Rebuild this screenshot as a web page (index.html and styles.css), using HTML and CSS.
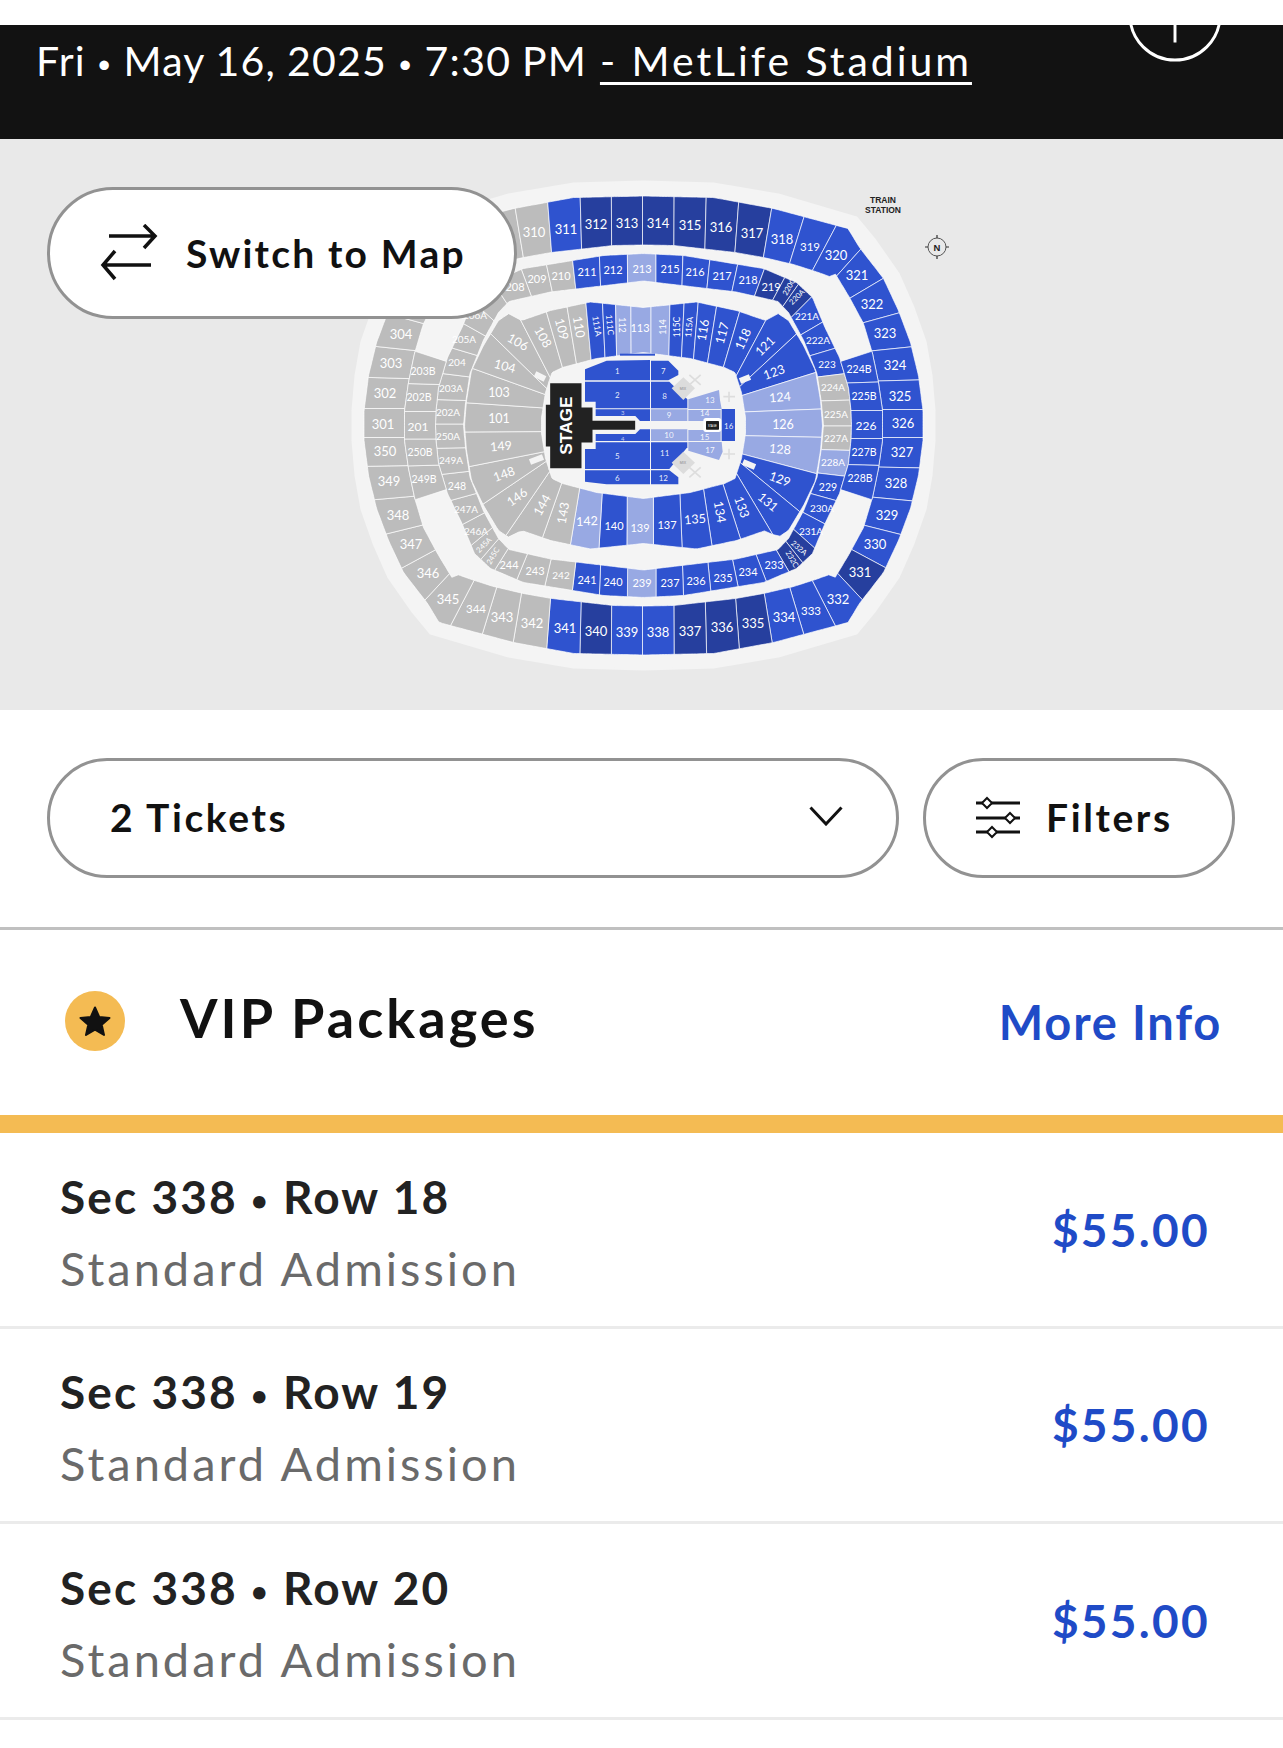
FILE: index.html
```html
<!DOCTYPE html>
<html lang="en">
<head>
<meta charset="utf-8">
<title>MetLife Stadium tickets</title>
<link rel="stylesheet" href="styles.css">
</head>
<body>
<div class="top-gap"></div>
<header class="event-bar">
  <p class="event-line">Fri <span class="dot">•</span> May 16, 2025 <span class="dot">•</span> 7:30 PM <a class="venue">- MetLife Stadium</a></p>
  <svg class="info-icon" viewBox="0 0 96 96"><circle cx="48" cy="48" r="46"/><path d="M48 20V76M20 48H76"/></svg>
</header>
<section class="map-panel">
  <svg class="seat-map" id="seatmap" viewBox="0 139 1283 571" xmlns="http://www.w3.org/2000/svg">
    <polygon id="stadium-base" class="base"/>
    <g id="rings"></g>
    <g class="floor" transform="translate(530 340) scale(.33333)">
      <polygon class="f-b" points="165,88 230,62 360,60 360,121 165,121"/>
      <polygon class="f-b" points="165,125 360,125 360,205 197,205 197,185 165,185"/>
      <polygon class="f-b" points="197,208 360,208 360,243 330,243 316,228 197,228"/>
      <polygon class="f-b" points="197,282 316,282 330,268 360,268 360,303 197,303"/>
      <polygon class="f-b" points="165,327 197,327 197,307 360,307 360,387 165,387"/>
      <polygon class="f-b" points="165,391 360,391 360,433 230,433 165,425"/>
      <polygon class="f-b" points="363,62 415,62 445,92 445,105 415,121 363,121"/>
      <polygon class="f-b" points="363,125 418,125 472,178 472,205 363,205"/>
      <polygon class="f-l" points="363,208 472,208 472,243 363,243"/>
      <polygon class="f-l" points="363,268 472,268 472,303 363,303"/>
      <polygon class="f-b" points="363,307 472,307 472,322 418,387 363,387"/>
      <polygon class="f-b" points="363,391 418,391 445,412 445,433 363,433"/>
      <polygon class="f-l" points="475,178 567,150 570,180 575,207 475,207"/>
      <polygon class="f-l" points="475,210 572,210 572,243 475,243"/>
      <polygon class="f-l" points="475,270 572,270 572,303 475,303"/>
      <polygon class="f-b" points="575,207 615,207 615,303 575,303"/>
      <polygon class="f-l" points="475,306 575,306 578,335 567,360 475,332"/>
      <rect class="strip" x="270" y="41" width="105" height="6"/>
      <polygon class="mix" points="460,112 495,145 460,180 425,145"/>
      <polygon class="mix" points="460,335 495,368 460,402 425,368"/>
      <path class="cross" d="M478 135 512 105M478 105 512 135M580 170H615M597 155V186M580 342H615M597 326V358M478 382 512 412M478 412 512 382"/>
      <rect class="bstage-bg" x="520" y="234" width="54" height="42" rx="8"/>
      <rect class="bstage" x="528" y="243" width="39" height="26" rx="2"/>
      <text class="bstage-t" x="547" y="261">STAGE</text>
      <path class="stage" d="M58 127H157V200H190V240H318V272H190V310H157V387H58V322H45V192H58Z"/>
      <text class="stage-t" transform="translate(127 257) rotate(-90)">STAGE</text>
      <text class="mix-t" x="459" y="150">MIX</text>
      <text class="mix-t" x="459" y="373">MIX</text>
      <text class="f-t" x="262" y="94">1</text>
      <text class="f-t" x="262" y="166">2</text>
      <text class="f-t f-s" x="278" y="218">3</text>
      <text class="f-t f-s" x="278" y="297">4</text>
      <text class="f-t" x="262" y="348">5</text>
      <text class="f-t" x="262" y="414">6</text>
      <text class="f-t" x="400" y="94">7</text>
      <text class="f-t" x="404" y="168">8</text>
      <text class="f-t" x="417" y="226">9</text>
      <text class="f-t" x="417" y="286">10</text>
      <text class="f-t" x="404" y="340">11</text>
      <text class="f-t" x="400" y="414">12</text>
      <text class="f-t" x="540" y="180">13</text>
      <text class="f-t" x="524" y="218">14</text>
      <text class="f-t" x="524" y="291">15</text>
      <text class="f-t" x="596" y="258">16</text>
      <text class="f-t" x="540" y="330">17</text>
    </g>
    <path class="notch" d="M535 374 545 379M530 462 543 457M740 381 750 377M743 462 755 467"/>
    <text class="station" x="883" y="203">TRAIN</text>
    <text class="station" x="883" y="213">STATION</text>
    <g class="compass">
      <circle cx="937" cy="247" r="9"/>
      <path d="M925 247H928M946 247H949M937 235V238M937 256V259"/>
      <text x="937" y="247">N</text>
    </g>
  </svg>
  <button class="switch-pill" type="button">
    <svg class="swap-icon" viewBox="0 0 60 58"><path d="M9 12H55M44 1 55 12 44 24M51 41H3M15 27 3 41 15 55"/></svg>
    <span>Switch to Map</span>
  </button>
</section>
<section class="controls">
  <div class="pill tickets">
    <span>2 Tickets</span>
    <svg class="chevron" viewBox="0 0 34 20"><path d="M1.5 1.5 17 18 32.500 1.500"/></svg>
  </div>
  <div class="pill filters">
    <svg class="filter-icon" viewBox="0 0 44 40">
      <path d="M0 5H44M0 20H44M0 34H44"/>
      <path class="knob" d="M11 0 16 5 11 10 6 5ZM34 15 39 20 34 25 29 20ZM16 29 21 34 16 39 11 34Z"/>
    </svg>
    <span>Filters</span>
  </div>
</section>
<section class="vip-head">
  <div class="vip-title">
    <svg class="vip-badge" viewBox="0 0 60 60"><circle cx="30" cy="30" r="30"/><polygon points="30,16.500 34.200,26 44.500,27 36.700,33.800 39,44 30,38.700 21,44 23.300,33.800 15.500,27 25.800,26"/></svg>
    <h2>VIP Packages</h2>
  </div>
  <a class="more-info">More Info</a>
</section>
<div class="gold-bar"></div>
<ul class="ticket-list">
  <li class="ticket"><div><p class="seat">Sec 338 <span class="dot">•</span> Row 18</p><p class="admission">Standard Admission</p></div><p class="price">$55.00</p></li>
  <li class="ticket"><div><p class="seat">Sec 338 <span class="dot">•</span> Row 19</p><p class="admission">Standard Admission</p></div><p class="price">$55.00</p></li>
  <li class="ticket"><div><p class="seat">Sec 338 <span class="dot">•</span> Row 20</p><p class="admission">Standard Admission</p></div><p class="price">$55.00</p></li>
</ul>
<script src="map.js"></script>
</body>
</html>
```
FILE: styles.css
```css
* { box-sizing: border-box; }
html, body { margin: 0; padding: 0; background: #fff; }
body { width: 1283px; height: 1748px; overflow: hidden; font-family: "Lato", "Noto Sans", sans-serif; color: #111; }
p, h2, ul { margin: 0; padding: 0; }
.top-gap { height: 25px; background: #fff; }
.dot { font-size: .62em; vertical-align: .12em; }

.event-bar { position: relative; height: 114px; background: #121212; overflow: hidden; padding: 11px 0 0 36px; }
.event-line { font-size: 41px; line-height: 50px; color: #fff; letter-spacing: 1.26px; word-spacing: -1px; white-space: nowrap; }
.venue { text-decoration: underline; text-decoration-thickness: 3px; text-underline-offset: 6px; margin-left: 2px; letter-spacing: 2.95px; word-spacing: 0; }
.info-icon { position: absolute; left: 1128px; top: -57px; width: 94px; height: 94px; }
.info-icon circle, .info-icon path { fill: none; stroke: #fff; stroke-width: 3px; }

.map-panel { position: relative; height: 571px; background: #e9e9e9; }
.seat-map { display: block; width: 1283px; height: 571px; }
.base { fill: #f4f4f4; stroke: #f4f4f4; stroke-width: 2px; stroke-linejoin: round; }
.sec { stroke: #fff; stroke-width: .8px; stroke-opacity: .85; }
.sec-b, .f-b { fill: #2f53cf; }
.sec-d { fill: #263f9e; }
.sec-l, .f-l { fill: #98a9e3; }
.sec-g { fill: #bcbcbc; }
.lbl { fill: #fff; text-anchor: middle; dominant-baseline: central; font-family: "Lato", sans-serif; }
.strip { fill: #2f53cf; }
.mix { fill: #dcdcdc; }
.cross { fill: none; stroke: #dddddd; stroke-width: 5px; }
.bstage-bg { fill: #fff; }
.bstage { fill: #1d1d1d; }
.bstage-t { fill: #fff; font-size: 8px; text-anchor: middle; font-family: "Liberation Sans", sans-serif; }
.stage { fill: #222; stroke: #f4f4f4; stroke-width: 5px; }
.stage-t { fill: #fff; font: bold 52px "Liberation Sans", sans-serif; text-anchor: middle; }
.mix-t { fill: #8a8a8a; font-size: 11px; text-anchor: middle; font-family: "Liberation Sans", sans-serif; }
.f-t { fill: #fff; fill-opacity: .9; font-size: 24px; text-anchor: middle; dominant-baseline: central; font-family: "Lato", sans-serif; }
.f-s { font-size: 18px; fill-opacity: .7; }
.notch { fill: none; stroke: #f4f4f4; stroke-width: 6px; }
.station { fill: #222; font: bold 8.5px "Liberation Sans", sans-serif; text-anchor: middle; }
.compass circle { fill: none; stroke: #555; stroke-width: 1px; }
.compass path { fill: none; stroke: #333; stroke-width: 1.2px; }
.compass text { fill: #222; font: bold 9.500px "Liberation Sans", sans-serif; text-anchor: middle; dominant-baseline: central; }

.switch-pill { position: absolute; left: 47px; top: 48px; width: 470px; height: 132px; background: #fff; border: 3px solid #929292; border-radius: 66px; display: flex; align-items: center; padding: 0 0 0 50px; gap: 26px; font-family: inherit; font-size: 39px; font-weight: 700; color: #111; letter-spacing: 2.2px; }
.swap-icon { width: 60px; height: 58px; flex: none; }
.swap-icon path { fill: none; stroke: #111; stroke-width: 3.5px; }

.controls { display: flex; gap: 24px; padding: 48px 48px 50px 47px; border-bottom: 3px solid #c0c0c0; height: 220px; }
.pill { height: 120px; border: 3px solid #929292; border-radius: 60px; display: flex; align-items: center; font-size: 39px; font-weight: 700; letter-spacing: 2.6px; }
.tickets { width: 852px; justify-content: space-between; padding: 0 53px 0 60px; }
.tickets span, .filters span { margin-top: -2px; }
.chevron { width: 34px; height: 20px; margin-top: -4px; }
.chevron path { fill: none; stroke: #111; stroke-width: 3px; }
.filters { width: 312px; padding-left: 50px; gap: 26px; }
.filter-icon { width: 44px; height: 40px; flex: none; overflow: visible; }
.filter-icon path { fill: none; stroke: #111; stroke-width: 3px; }
.filter-icon .knob { fill: #fff; stroke-width: 2px; }

.vip-head { display: flex; align-items: center; justify-content: space-between; height: 185px; padding: 0 61px 0 65px; }
.vip-title { display: flex; align-items: center; gap: 55px; margin-top: -3px; }
.vip-badge { width: 60px; height: 60px; flex: none; }
.vip-badge circle { fill: #f4bb53; }
.vip-badge polygon { fill: #111; stroke: #111; stroke-width: 2px; stroke-linejoin: round; }
.vip-title h2 { font-size: 54px; line-height: 60px; font-weight: 700; letter-spacing: 3.1px; margin-top: -7px; }
.more-info { font-size: 47px; font-weight: 700; color: #1f4bc7; letter-spacing: 1.8px; margin-top: -1px; }
.gold-bar { height: 18px; background: #f4bb53; }

.ticket-list { list-style: none; }
.ticket { display: flex; align-items: center; justify-content: space-between; height: 195.500px; padding: 0 73px 0 60px; border-bottom: 3px solid #ebebeb; }
.ticket > div { margin-top: 6px; }
.seat { font-size: 46px; line-height: 68px; font-weight: 700; color: #222; letter-spacing: 2.1px; }
.admission { font-size: 47px; line-height: 68px; color: #6a6a6a; letter-spacing: 3px; }
.price { font-size: 46px; font-weight: 700; color: #1f4bc7; letter-spacing: 2.300px; }
```
FILE: map.js
```js
// Seat map: each ring is a list of sections [label, x, y, colour, rotation, size].
// Section edges run between neighbouring labels, along the normal of the oval.
var NS = 'http://www.w3.org/2000/svg';
var CX = 643.5, CY = 425.5;
var TAU = Math.PI * 2;

function mirror(q) {
  var p = [];
  q.forEach(function (a) { p.push([a[0], -a[1]]); });
  q.slice().reverse().forEach(function (a) { p.push([a[0], a[1]]); });
  q.forEach(function (a) { p.push([-a[0], a[1]]); });
  q.slice().reverse().forEach(function (a) { p.push([-a[0], -a[1]]); });
  return p;
}
function radius(poly, t) {
  var dx = Math.cos(t), dy = Math.sin(t), best = 0;
  for (var i = 0; i < poly.length; i++) {
    var a = poly[i], b = poly[(i + 1) % poly.length];
    var ex = b[0] - a[0], ey = b[1] - a[1];
    var den = dx * ey - dy * ex;
    if (Math.abs(den) < 1e-9) continue;
    var r = (a[0] * ey - a[1] * ex) / den;
    var u = (a[0] * dy - a[1] * dx) / den;
    if (r > 0 && u >= -1e-6 && u <= 1 + 1e-6 && r > best) best = r;
  }
  return best;
}
function pt(poly, t) {
  var r = radius(poly, t);
  return [CX + r * Math.cos(t), CY + r * Math.sin(t)];
}
function inside(poly, x, y) {
  return Math.hypot(x, y) < radius(poly, Math.atan2(y, x));
}
function add(parent, name, attrs, text) {
  var el = document.createElementNS(NS, name);
  for (var k in attrs) el.setAttribute(k, attrs[k]);
  if (text) el.textContent = text;
  parent.appendChild(el);
  return el;
}

var R1O = mirror([[0,229.5],[70,228],[130,217],[204.5,197],[216,178],[240,147],[255,115],[267,83],[275,50],[279.5,15],[279.5,0]]);
var R1I = mirror([[0,180.5],[30,180],[92,173],[120,168],[150,161],[172,154],[186,149],[191,153],[206,128],[220,102],[229,72],[235,43],[239,15],[239,0]]);
var R2O = mirror([[0,172],[40,170],[120,157],[153,143],[169,128],[181.5,98],[196,68],[205,38],[207.5,15],[208,0]]);
var R2I = mirror([[0,144.500],[93,133.500],[134.500,124],[145,113],[160,85.500],[173.500,52],[178,22],[180,0]]);
var R3O = mirror([[0,118],[53,123.500],[93,115],[122,105],[134.500,112],[145,105],[160,80],[172,55],[177,25],[179,0]]);
var R3I = mirror([[0,73],[47,67],[81,58],[91.500,53],[98,33],[102,8],[102,0]]);
var BASE = mirror([[0,244],[70,242],[135,231],[213,208],[232,185],[255,152],[270,118],[282,84],[288,50],[291,15],[291,0]]);

var ring1 = [
['301',383,424,'g'],['302',385,393,'g'],['303',391,363,'g'],['304',401,334,'g'],['',416,305,'g'],['',432,280,'g'],['',452,258,'g'],['',478,245,'g'],['',505,236,'g'],
['310',534,232,'g'],['311',566,229,'b'],['312',596,224,'d'],['313',627,223,'d'],['314',658,223,'d'],['315',690,225,'d'],['316',721,227,'d'],['317',752,233,'d'],
['318',782,239,'b'],['319',810,246,'b',0,11.5],['320',836,255,'b'],['321',857,275,'b'],['322',872,304,'b'],['323',885,333,'b'],['324',895,365,'b'],['325',900,396,'b'],
['326',903,423,'b'],['327',902,452,'b'],['328',896,483,'b'],['329',887,515,'b'],['330',875,544,'b'],['331',860,572,'d'],['332',838,599,'b'],['333',811,610,'b',0,11.5],
['334',784,617,'b'],['335',753,623,'d'],['336',722,627,'d'],['337',690,631,'d'],['338',658,632,'b'],['339',627,632,'b'],['340',596,631,'d'],['341',565,628,'b'],
['342',532,623,'g'],['343',502,617,'g'],['344',476,608,'g',0,11.5],['345',448,599,'g'],['346',428,573,'g'],['347',411,544,'g'],['348',398,515,'g'],['349',389,481,'g'],['350',385,451,'g']
];
var ring2 = [
['209',537,278,'g'],['210',561,275,'g'],['211',587,271,'b'],['212',613,269,'b'],['213',642,268,'l'],['215',670,268,'b'],['216',695,271,'b'],['217',722,275,'b'],['218',748,279,'b'],['219',771,286,'d'],
['220C',789,287,'d',-60,7.5],['220A',797,297,'d',-45,7.5],['221A',807,316,'b',0,10],['222A',818,340,'b',0,10],['223',827,364,'b',0,10],['224A',833,387,'g',0,10],['225A',836,414,'g',0,10],
['227A',836,438,'g',0,10],['228A',833,462,'l',0,10],['229',828,487,'b',0,10.5],['230A',822,508,'b',0,10],['231A',811,531,'b',0,10],['232A',799,548,'d',40,7.5],['232C',792,559,'d',60,7.5],
['233',774,564,'b'],['234',748,571,'b'],['235',723,577,'b'],['236',696,580,'b'],['237',670,582,'b'],['239',642,582,'l'],['240',613,581,'b'],['241',587,579,'b'],
['242',561,575,'g',0,10],['243',535,570,'g'],['244',509,564,'g'],['245C',493,556,'g',-60,7.5],['245A',484,545,'g',-45,7.5],['246A',476,531,'g',0,10],['247A',466,509,'g',0,10],['248',457,486,'g',0,10.5],
['249A',451,460,'g',0,10],['250A',448,436,'g',0,10],['202A',448,412,'g',0,10],['203A',451,388,'g',0,10],['204',457,362,'g',0,10],['205A',464,339,'g',0,10],['206A',475,315,'g',0,10],['',487,303,'g'],['208',515,286,'g']
];
var ringBR = [['224B',859,369,'b',0,10.500],['225B',864,396,'b',0,10.500],['226',866,425,'b',0,12],['227B',864,452,'b',0,10.500],['228B',860,478,'b',0,10.500]];
var ringBL = [['249B',424,479,'g',0,10.500],['250B',420,452,'g',0,10.500],['201',418,426,'g',0,12],['202B',419,397,'g',0,10.500],['203B',423,371,'g',0,10.500]];
var ring3 = [
['101',499,418,'g'],['103',499,392,'g'],['104',505,366,'g',15],['106',518,342,'g',30],['108',543,337,'g',60],['109',562,329,'g',75],['110',579,327,'g',80],
['111A',597,326,'b',80,8.500],['111C',610,325,'b',85,8.500],['112',622,325,'l',90,9],['113',640,327,'l',0,11],['114',662,327,'l',-90,9],['115C',677,327,'b',-90,8.500],['115A',689,327,'b',-85,8.500],
['116',703,330,'b',-80],['117',722,333,'b',-75],['118',743,339,'b',-65],['121',765,346,'b',-45],['123',774,372,'b',-20],['124',780,397,'l',-5],['126',783,424,'l'],['128',780,449,'l',5],
['129',780,479,'b',20],['131',768,502,'b',40],['133',742,507,'b',70],['134',720,512,'b',80],['135',695,519,'b',-5],['137',667,524,'b',0,11],['139',640,527,'l',0,11],['140',614,525,'b',0,11],
['142',587,521,'l',-2],['143',563,513,'g',-80],['144',542,505,'g',-60],['146',517,497,'g',-35],['148',504,474,'g',-20],['149',501,446,'g',-5]
];

var rings = document.getElementById('rings');
var labels = [];

document.getElementById('stadium-base').setAttribute('points',
  BASE.map(function (p) { return (p[0] + CX) + ',' + (p[1] + CY); }).join(' '));

function near(t, a) { while (t > a + Math.PI) t -= TAU; while (t < a - Math.PI) t += TAU; return t; }

// Angles at which the edge between two neighbouring sections meets both curves.
function edge(p, q, shape, outer, inner) {
  var x = (p[1] + q[1]) / 2 - CX, y = (p[2] + q[2]) / 2 - CY;
  var e = shape.p - 1;
  var nx = (x < 0 ? -1 : 1) * Math.pow(Math.abs(x) / shape.a, e) / shape.a;
  var ny = (y < 0 ? -1 : 1) * Math.pow(Math.abs(y) / shape.b, e) / shape.b;
  var len = Math.hypot(nx, ny);
  nx /= len; ny /= len;
  var ox = x, oy = y, ix = x, iy = y, k;
  for (k = 0; k < 300 && inside(outer, ox, oy); k++) { ox += nx * .4; oy += ny * .4; }
  for (k = 0; k < 300 && !inside(inner, ix, iy); k++) { ix -= nx * .4; iy -= ny * .4; }
  return { o: Math.atan2(oy, ox), i: Math.atan2(iy, ix) };
}

function polygon(s, o1, o2, i1, i2, outer, inner) {
  var pts = [], steps = 10, k;
  for (k = 0; k <= steps; k++) pts.push(pt(outer, o1 + (o2 - o1) * k / steps));
  for (k = steps; k >= 0; k--) pts.push(pt(inner, i1 + (i2 - i1) * k / steps));
  add(rings, 'polygon', {
    'class': 'sec sec-' + s[3],
    points: pts.map(function (p) { return p[0].toFixed(1) + ',' + p[1].toFixed(1); }).join(' ')
  });
}

function draw(list, outer, inner, size, shape, startA, endA) {
  var n = list.length, closed = startA === undefined, edges = [];
  list.forEach(function (s, i) { edges.push(edge(s, list[(i + 1) % n], shape, outer, inner)); });
  list.forEach(function (s, i) {
    var a = Math.atan2(s[2] - CY, s[1] - CX);
    var prev = edges[(i + n - 1) % n], next = edges[i];
    var o1 = near(prev.o, a), i1 = near(prev.i, a), o2 = near(next.o, a), i2 = near(next.i, a);
    if (!closed && i === 0) { o1 = near(startA, a); i1 = o1; }
    if (!closed && i === n - 1) { o2 = near(endA, a); i2 = o2; }
    polygon(s, o1, o2, i1, i2, outer, inner);
    if (s[0]) labels.push({ s: s, size: s[5] || size });
  });
}

var DEG = Math.PI / 180;
var S1 = { a: 280, b: 230, p: 3.5 }, S2 = { a: 208, b: 172, p: 3 }, S3 = { a: 176, b: 118, p: 3 };
draw(ring1, R1O, R1I, 13, S1);
draw(ring2, R2O, R2I, 11, S2);
draw(ringBR, R1I, R2O, 11, S1, -18 * DEG, 18 * DEG);
draw(ringBL, R1I, R2O, 11, S1, 162 * DEG, 198 * DEG);
draw(ring3, R3O, R3I, 12.500, S3);

labels.forEach(function (l) {
  var s = l.s, attrs = { 'class': 'lbl', x: s[1], y: s[2], 'font-size': l.size };
  if (s[4]) attrs.transform = 'rotate(' + s[4] + ' ' + s[1] + ' ' + s[2] + ')';
  add(rings, 'text', attrs, s[0]);
});
```
